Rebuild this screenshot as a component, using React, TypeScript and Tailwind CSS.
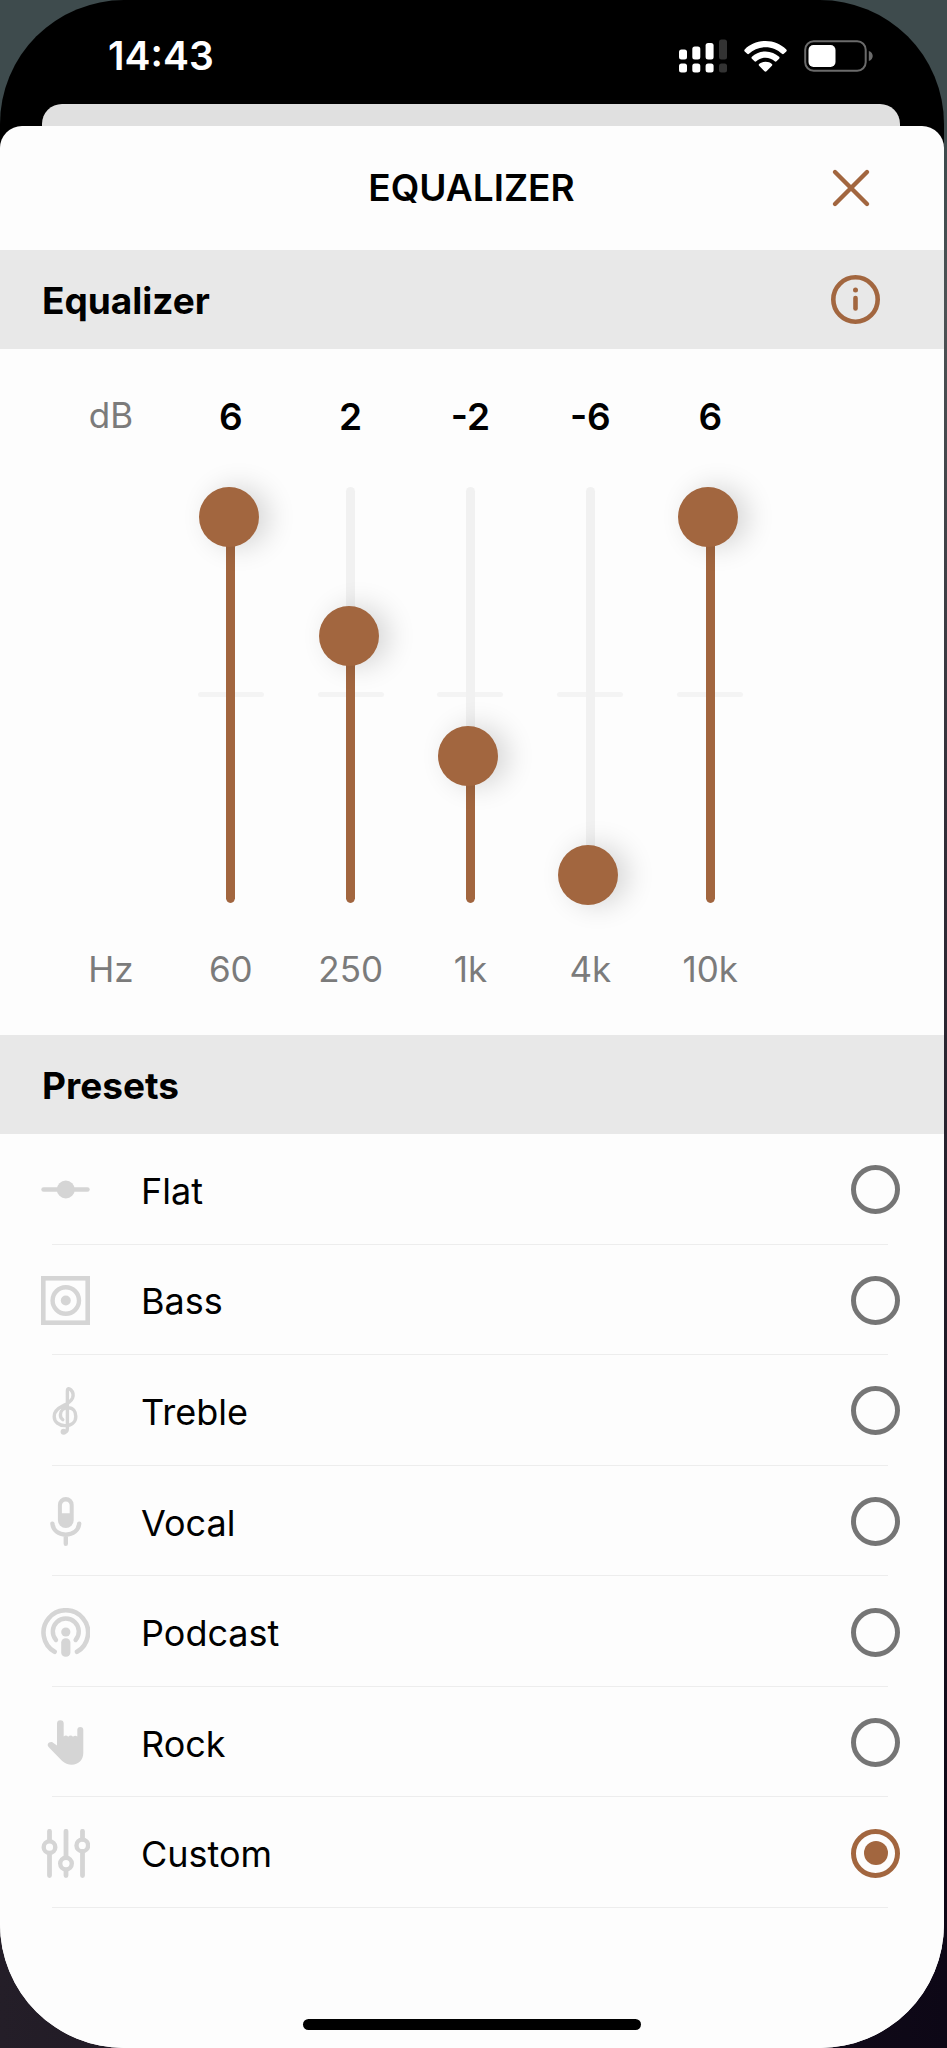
import { useState } from "react"
import type { ReactNode } from "react"

const bands = [
    { hz: "60", label: "60 Hz" },
    { hz: "250", label: "250 Hz" },
    { hz: "1k", label: "1 kHz" },
    { hz: "4k", label: "4 kHz" },
    { hz: "10k", label: "10 kHz" },
]

const presets: { name: string; icon: ReactNode }[] = [
    {
        name: "Flat",
        icon: (
            <>
                <path d="M2.5 24.5H46.5" strokeWidth="4.4" />
                <circle cx="24.8" cy="24.5" r="9" fill="currentColor" stroke="none" />
            </>
        ),
    },
    {
        name: "Bass",
        icon: (
            <>
                <rect x="2.3" y="2.3" width="44.4" height="44.4" strokeWidth="4.6" strokeLinejoin="miter" />
                <circle cx="24.8" cy="24.5" r="13.2" strokeWidth="4.4" />
                <circle cx="24.8" cy="24.5" r="5" fill="currentColor" stroke="none" />
            </>
        ),
    },
    {
        name: "Treble",
        icon: (
            <>
                <path
                    d="M23.2 46.2C25.5 46.2 26.4 44.5 26.4 42V5C26.4 2.2 28.2 2.2 29.8 3.8C31.8 5.8 32.6 9 31.6 11.8C30 15.8 26.5 17.5 22 19.8C16.5 22.4 13.2 25.6 13.2 30.4C13.2 36 18 39.6 24 39.6C30.5 39.6 34.8 36 34.8 30.4C34.8 25.4 31.8 21.8 27.4 21.8C22.6 21.8 19.4 24.8 19.4 28.8C19.4 30.8 20.2 32.6 21.8 33.6"
                    strokeWidth="3.4"
                />
                <circle cx="22.6" cy="45.8" r="3" fill="currentColor" stroke="none" />
            </>
        ),
    },
    {
        name: "Vocal",
        icon: (
            <>
                <path
                    d="M24.8 0A7.9 7.9 0 0 1 32.7 7.9V23.2A7.9 7.9 0 0 1 16.9 23.2V7.9A7.9 7.9 0 0 1 24.8 0ZM24.8 4.4C22.2 4.4 20.9 6 20.9 8.6V16.3H28.7V8.6C28.7 6 27.4 4.4 24.8 4.4Z"
                    fill="currentColor"
                    fillRule="evenodd"
                    stroke="none"
                />
                <path d="M11.4 26.6C12.2 33.4 17.4 37.6 24.8 37.6S37.4 33.4 38.2 26.6M24.8 38V46.8" strokeWidth="4.4" />
            </>
        ),
    },
    {
        name: "Podcast",
        icon: (
            <>
                <path d="M13.6 43.8A22.3 22.3 0 1 1 36 43.8" strokeWidth="4.6" />
                <path d="M15 32A13 13 0 1 1 34.6 32" strokeWidth="4.4" />
                <circle cx="24.8" cy="24" r="4.6" fill="currentColor" stroke="none" />
                <rect x="20.2" y="30.2" width="9.2" height="18.6" rx="4.4" fill="currentColor" stroke="none" />
            </>
        ),
    },
    {
        name: "Rock",
        icon: (
            <path
                d="M16 5.6A3.35 3.35 0 0 1 22.7 5.6V18.4C24.3 17.2 26 17.4 27.2 18.8C28.6 17.2 30.6 17.2 32 18.8C33.2 17.4 34.8 17.4 36.3 18.4V12A3 3 0 0 1 42.3 12V35C42.3 41.8 37.4 46.7 30.8 46.7C27 46.7 23.8 45.4 21.2 43L7.8 29.2C5.4 26.6 7.4 23.4 11 24L16 27.4Z"
                fill="currentColor"
                stroke="none"
            />
        ),
    },
    {
        name: "Custom",
        icon: (
            <>
                <path
                    d="M8.5 2.3V11M8.5 25V46.6M25 2.3V28M25 42V46.6M41.5 2.3V10M41.5 23V46.6"
                    strokeWidth="4.8"
                />
                <circle cx="8.5" cy="18.2" r="5.8" strokeWidth="4.4" />
                <circle cx="25" cy="34.6" r="5.8" strokeWidth="4.4" />
                <circle cx="41.3" cy="16.4" r="5.8" strokeWidth="4.4" />
            </>
        ),
    },
]

function StatusBar() {
    return (
        <div className="flex h-[104px] items-center justify-between pt-2 pr-[70px] pl-[108px] text-white">
            <div className="text-[39px] leading-10 font-semibold">14:43</div>
            <div className="flex items-center gap-[17px]">
                <svg width="48" height="34" viewBox="0 0 48 34" fill="currentColor" aria-hidden="true">
                    <rect x="0" y="10.5" width="8" height="10" rx="2.5" />
                    <rect x="13.3" y="7.5" width="8" height="13" rx="2.5" />
                    <rect x="26.6" y="4" width="8" height="16.5" rx="2.5" />
                    <rect x="40" y="0.5" width="8" height="20" rx="2.5" opacity="0.2" />
                    <rect x="0" y="24.5" width="8" height="9" rx="2.5" />
                    <rect x="13.3" y="24.5" width="8" height="9" rx="2.5" />
                    <rect x="26.6" y="24.5" width="8" height="9" rx="2.5" />
                    <rect x="40" y="24.5" width="8" height="9" rx="2.5" opacity="0.2" />
                </svg>
                <svg width="43" height="31" viewBox="0 0 43 31" fill="currentColor" aria-hidden="true">
                    <path d="M21.5 0C29.8 0 37 3.2 42.3 8.4C42.9 9 42.9 9.8 42.3 10.4L39.8 12.8C39.3 13.3 38.5 13.3 38 12.8C33.7 8.7 27.9 6.2 21.5 6.2S9.3 8.7 5 12.8C4.5 13.3 3.7 13.3 3.2 12.8L.7 10.4C.1 9.8 .1 9 .7 8.4C6 3.2 13.2 0 21.5 0Z" />
                    <path d="M21.5 10.4C27 10.4 31.6 12.5 35.1 15.8C35.7 16.4 35.7 17.2 35.1 17.8L32.5 20.3C32 20.8 31.3 20.8 30.7 20.3C28.3 18.1 25 16.7 21.5 16.7S14.7 18.1 12.3 20.3C11.7 20.8 11 20.8 10.5 20.3L7.9 17.8C7.3 17.2 7.3 16.4 7.9 15.8C11.4 12.5 16 10.4 21.5 10.4Z" />
                    <path d="M21.5 20.8C24.2 20.8 26.4 21.7 27.9 23C28.5 23.5 28.5 24.2 27.9 24.8L22.5 30.2C21.9 30.8 21.1 30.8 20.5 30.2L15.1 24.8C14.5 24.2 14.5 23.5 15.1 23C16.6 21.7 18.8 20.8 21.5 20.8Z" />
                </svg>
                <svg width="70" height="32" viewBox="0 0 70 32" fill="none" aria-hidden="true">
                    <rect x="1.2" y="1.2" width="60.5" height="29.6" rx="8.5" stroke="#6b6b6b" strokeWidth="2" />
                    <rect x="4.5" y="5" width="27" height="22" rx="5" fill="currentColor" />
                    <path d="M64.8 11C70 12.5 70 19.5 64.8 21Z" fill="#6b6b6b" />
                </svg>
            </div>
        </div>
    )
}

function Band({ hz, label, value, onChange }: { hz: string; label: string; value: number; onChange: (v: number) => void }) {
    return (
        <div className="flex flex-col items-center">
            <output className="text-[37px] leading-10 font-semibold">{value}</output>
            <div className="relative mt-[50px] mb-[46px] flex h-[418px] w-full justify-center">
                <div className="absolute top-[205px] h-[5px] w-[66px] rounded-full bg-[#f4f4f4]" />
                <div className="relative flex h-[416px] w-[9px] flex-col justify-end overflow-hidden rounded-full bg-[#f1f1f1]">
                    <div className="rounded-b-full bg-[#a2663f]" style={{ height: ((value + 6) / 12) * 85 + 7 + "%" }} />
                </div>
                <input
                    type="range"
                    min={-6}
                    max={6}
                    value={value}
                    aria-label={label}
                    onChange={(e) => onChange(Number(e.target.value))}
                    className="absolute inset-y-0 left-[calc(50%-32px)] h-full w-[60px] cursor-pointer appearance-none bg-transparent [direction:rtl] [writing-mode:vertical-lr] [&::-webkit-slider-thumb]:size-[60px] [&::-webkit-slider-thumb]:appearance-none [&::-webkit-slider-thumb]:rounded-full [&::-webkit-slider-thumb]:bg-[#a2663f] [&::-webkit-slider-thumb]:shadow-[10px_0_28px_rgba(0,0,0,0.16)]"
                />
            </div>
            <div className="text-[35px] leading-9 text-[#7b7b7b]">{hz}</div>
        </div>
    )
}

export default function App() {
    const [levels, setLevels] = useState([6, 2, -2, -6, 6])
    const [preset, setPreset] = useState("Custom")

    return (
        <div className="min-h-screen bg-[linear-gradient(to_bottom,#3e4b4d_0%,#3e4b4d_8%,#4c5254_15%,#322e38_40%,transparent_90%),linear-gradient(to_right,#241e28,#0d0716)] pr-[3px] font-['Inter','Liberation_Sans',sans-serif] text-black">
            <div className="flex min-h-screen flex-col overflow-hidden rounded-[124px] bg-[linear-gradient(to_bottom,black_50%,#fdfdfd_50%)]">
                <StatusBar />
                <div className="mr-11 ml-[42px] h-[22px] rounded-t-[20px] bg-[#e0e0e0]" />

                <main className="flex flex-1 flex-col rounded-t-[22px] bg-[#fdfdfd]">
                    <header className="grid h-[124px] grid-cols-[1fr_auto_1fr] items-center pr-[73px] pl-[72px]">
                        <h1 className="col-start-2 text-[37px] leading-10 font-semibold">EQUALIZER</h1>
                        <button type="button" aria-label="Close" className="justify-self-end text-[#a2663f]">
                            <svg width="40" height="40" viewBox="0 0 40 40" fill="none" stroke="currentColor" strokeWidth="4.4" strokeLinecap="round">
                                <path d="M4 4L36 36M36 4L4 36" />
                            </svg>
                        </button>
                    </header>

                    <div className="flex h-[99px] items-center justify-between bg-[#e8e8e8] pr-16 pl-[42px]">
                        <h2 className="pt-0.5 text-[37px] leading-10 font-bold">Equalizer</h2>
                        <button type="button" aria-label="About the equalizer" className="text-[#a2663f]">
                            <svg width="49" height="49" viewBox="0 0 49 49" fill="none" stroke="currentColor" strokeWidth="4.6" strokeLinecap="round">
                                <circle cx="24.5" cy="24.5" r="22.2" />
                                <path d="M24.5 23V33.5" />
                                <circle cx="24.5" cy="15" r="2.5" fill="currentColor" stroke="none" />
                            </svg>
                        </button>
                    </div>

                    <section className="grid grid-cols-7 pt-12 pr-[54px] pb-12 pl-[51px]">
                        <div className="flex flex-col items-center justify-between text-[35px] leading-9 text-[#7b7b7b]">
                            <div>dB</div>
                            <div>Hz</div>
                        </div>
                        {bands.map((band, i) => (
                            <Band
                                key={band.hz}
                                hz={band.hz}
                                label={band.label}
                                value={levels[i]}
                                onChange={(v) => {
                                    setLevels(levels.map((old, j) => (j === i ? v : old)))
                                    setPreset("Custom")
                                }}
                            />
                        ))}
                    </section>

                    <div className="flex h-[99px] items-center bg-[#e8e8e8] px-[42px]">
                        <h2 className="pt-0.5 text-[37px] leading-10 font-bold">Presets</h2>
                    </div>

                    <ul className="flex min-h-[774px] flex-col">
                        {presets.map((p) => (
                            <li key={p.name} className="flex flex-1 flex-col">
                                <label className="flex flex-1 cursor-pointer items-center pt-0.5 pr-11 pl-[41px]">
                                    <svg
                                        width="49"
                                        height="49"
                                        viewBox="0 0 49 49"
                                        fill="none"
                                        stroke="currentColor"
                                        strokeLinecap="round"
                                        className="text-[#d5d5d5]"
                                        aria-hidden="true"
                                    >
                                        {p.icon}
                                    </svg>
                                    <span className="ml-[51px] flex-1 pt-0.5 text-[36px] leading-10">{p.name}</span>
                                    <input
                                        type="radio"
                                        name="preset"
                                        checked={preset === p.name}
                                        onChange={() => setPreset(p.name)}
                                        className="grid size-[49px] appearance-none place-items-center rounded-full border-5 border-[#757575] before:size-6 before:rounded-full checked:border-[#a2663f] checked:before:bg-[#a2663f]"
                                    />
                                </label>
                                <div className="mr-14 ml-[52px] h-px bg-[#ededed]" />
                            </li>
                        ))}
                    </ul>

                    <div className="mt-auto mb-[18px] h-[11px] w-[338px] self-center rounded-full bg-black" />
                </main>
            </div>
        </div>
    )
}
